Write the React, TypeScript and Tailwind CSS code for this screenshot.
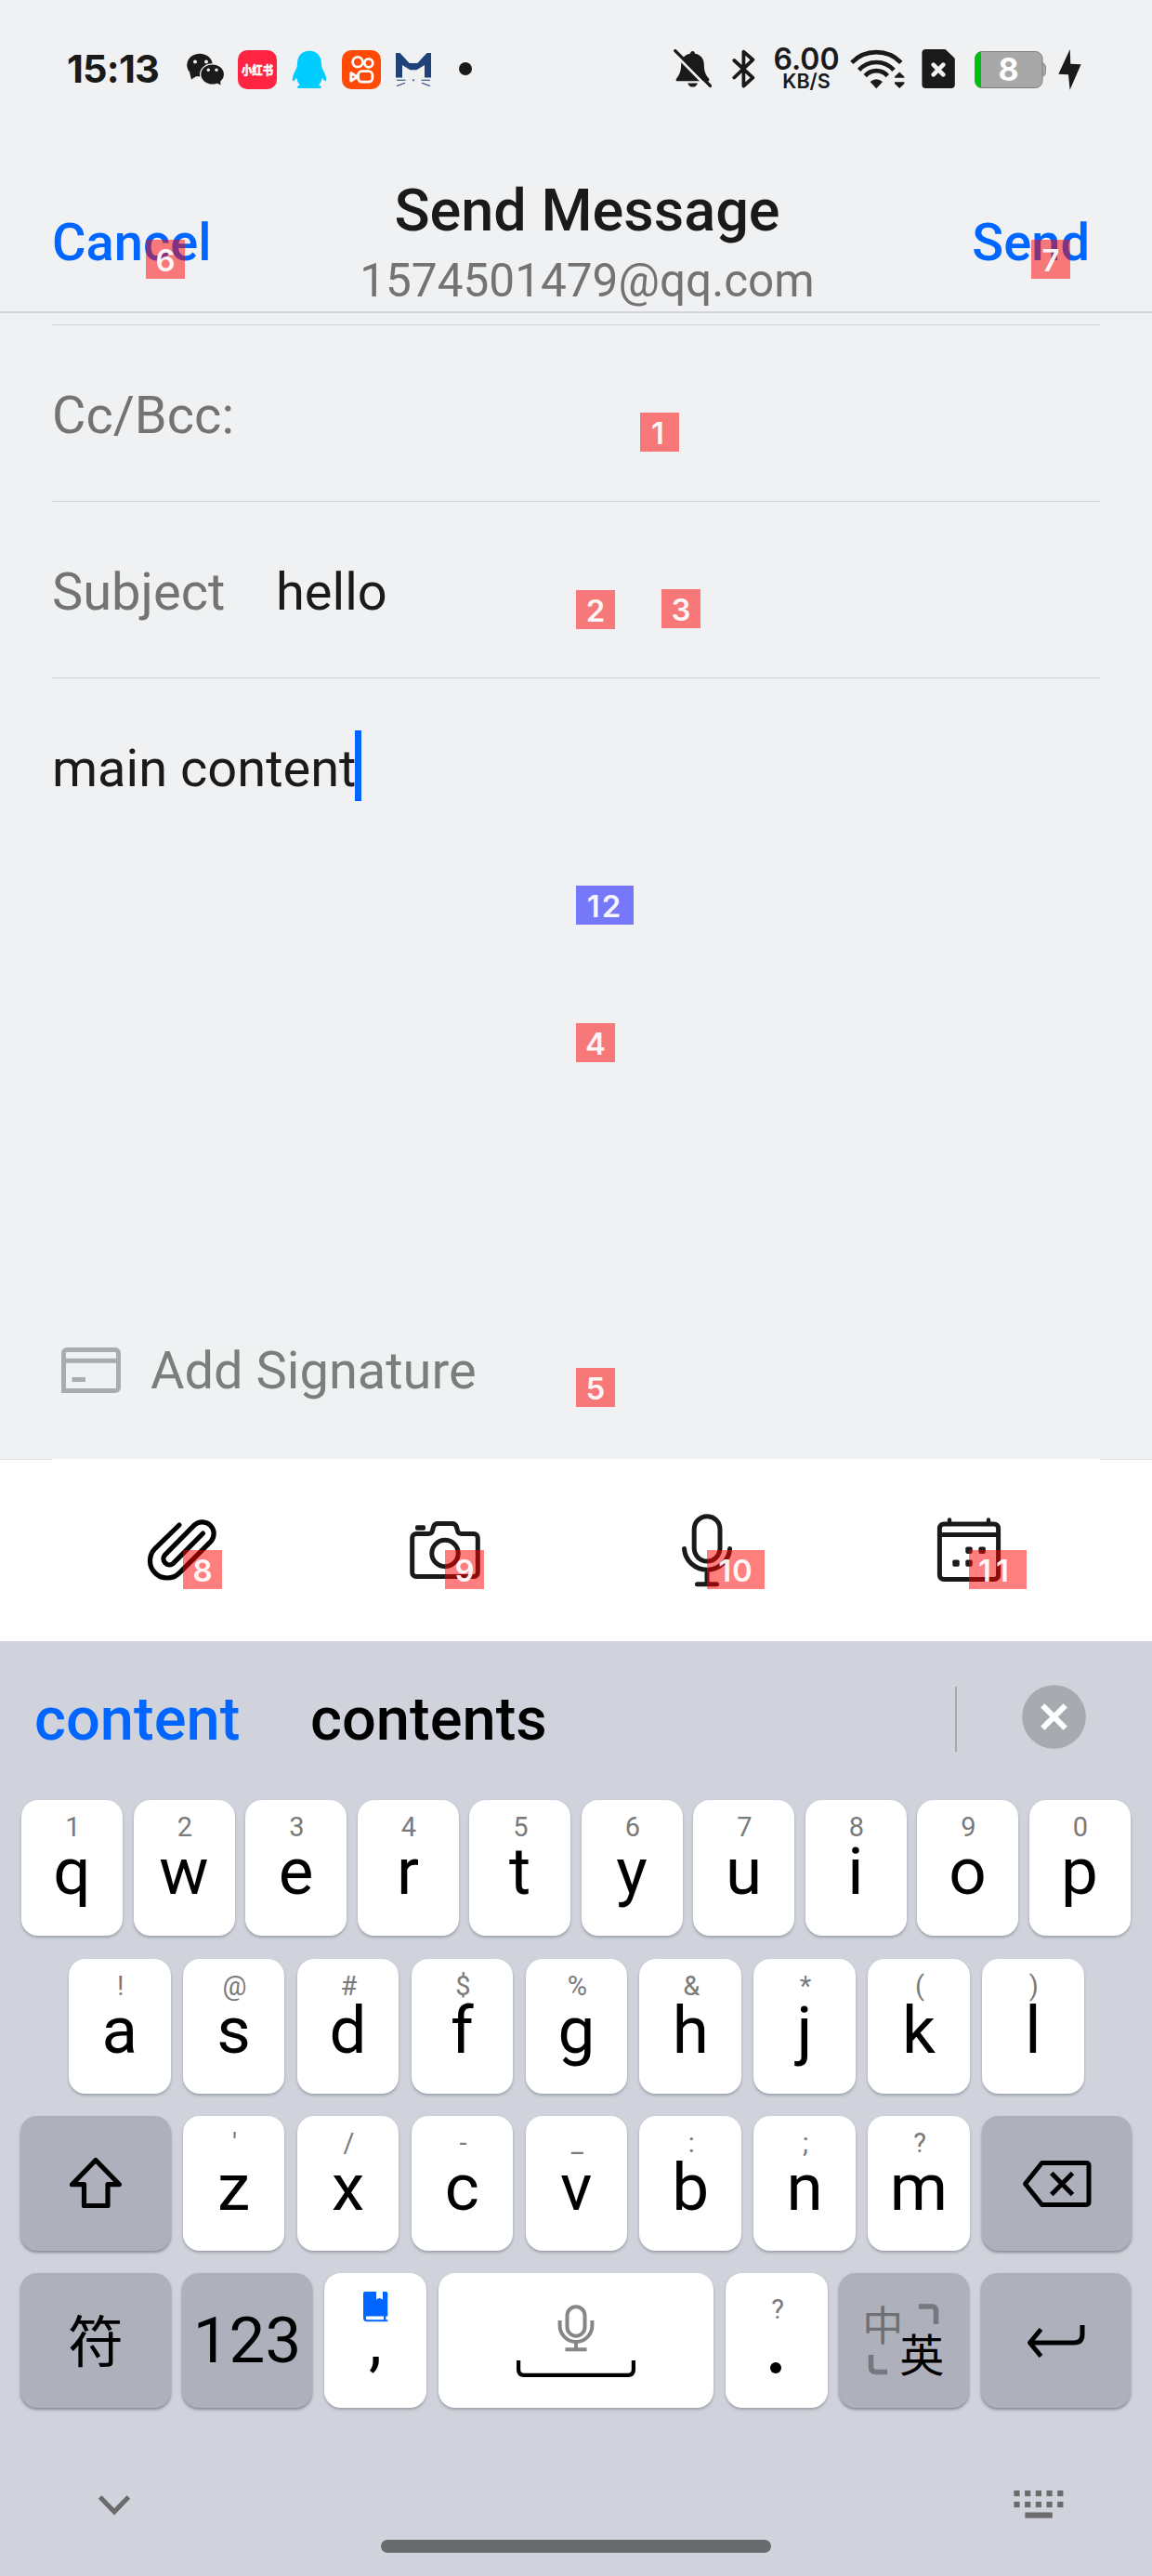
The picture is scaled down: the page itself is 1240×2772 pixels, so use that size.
import React from "react";

type KeyDef = [letter: string, hint: string];

const ROW1: KeyDef[] = [["q", "1"], ["w", "2"], ["e", "3"], ["r", "4"], ["t", "5"], ["y", "6"], ["u", "7"], ["i", "8"], ["o", "9"], ["p", "0"]];
const ROW2: KeyDef[] = [["a", "!"], ["s", "@"], ["d", "#"], ["f", "$"], ["g", "%"], ["h", "&"], ["j", "*"], ["k", "("], ["l", ")"]];
const ROW3: KeyDef[] = [["z", "'"], ["x", "/"], ["c", "-"], ["v", "_"], ["b", ":"], ["n", ";"], ["m", "?"]];

/* ---------- status bar icons ---------- */

const AppIcons = () => (
  <div className="flex items-center">
    <svg className="ml-[30px] h-[42px] w-[41px]" viewBox="201 54 41 42">
      <path d="M204 78 L206 85.5 L213 81Z" fill="#1a1a1a" />
      <ellipse cx="215" cy="70" rx="13.8" ry="12.3" fill="#1a1a1a" />
      <circle cx="210" cy="66.5" r="2" fill="#eff1f3" />
      <circle cx="222" cy="66.5" r="2" fill="#eff1f3" />
      <ellipse cx="228.6" cy="80" rx="13.6" ry="11.8" fill="#eff1f3" />
      <path d="M231 88 L237.5 91.5 L237 85Z" fill="#1a1a1a" />
      <ellipse cx="228.6" cy="80" rx="12.3" ry="10.5" fill="#1a1a1a" />
      <circle cx="224.3" cy="75.3" r="1.7" fill="#eff1f3" />
      <circle cx="233" cy="75.3" r="1.7" fill="#eff1f3" />
    </svg>
    <div className="ml-[14px] flex h-[42px] w-[42px] items-center justify-center rounded-[10px] bg-[#ff2442]">
      <svg className="h-[42px] w-[42px]" viewBox="0 0 42 42">
        <text x="4" y="25.8" textLength="34" lengthAdjust="spacingAndGlyphs" fontSize="13" fontWeight="900" fill="#fff" stroke="#fff" strokeWidth="0.4" fontFamily="'Noto Sans CJK SC', sans-serif">小红书</text>
      </svg>
    </div>
    <svg className="ml-[16px] h-[42px] w-[38px]" viewBox="314 54 38 42">
      <path
        d="M333 54.7C325 54.7 320 60 320 69C319.8 74 318 75 316 80C314.5 84 314.6 87 315.5 87.3C316.5 87.5 318 85.5 319.2 83.5C319.8 87 321 89.5 323 91.5C319.6 92.3 319.3 95 321.5 95H344.5C346.7 95 346.4 92.3 343 91.5C345 89.5 346.2 87 346.8 83.5C348 85.5 349.5 87.5 350.5 87.3C351.4 87 351.5 84 350 80C348 75 346.2 74 346 69C346 60 341 54.7 333 54.7Z"
        fill="#0cf"
      />
    </svg>
    <svg className="ml-[16px] h-[42px] w-[42px]" viewBox="368 54 42 42" fill="none" stroke="#fff" strokeWidth="2.8">
      <rect x="368" y="54" width="42" height="42" rx="10" fill="#ff4a08" stroke="none" />
      <circle cx="385" cy="66.8" r="5.4" />
      <circle cx="396.8" cy="67.8" r="4.5" />
      <rect x="385.5" y="76.7" width="15.4" height="11.4" rx="4" />
      <path d="M377.8 78.5V87L384.5 82.8Z" strokeLinejoin="round" />
    </svg>
    <svg className="ml-[16px] h-[42px] w-[38px]" viewBox="426 54 38 42">
      <path d="M426 57H430.5L440.7 68H449.3L459.5 57H464V83.5H457V70L448.5 75.2H441.5L433 70V83.5H426Z" fill="#1f4378" />
      <path d="M427 86.2H436.5M427 92.6L436 89.3M453.5 86.2H463M454 89.3L463 92.6" stroke="#1f4378" strokeWidth="1.1" />
      <path d="M443.7 85.5H446.3L445 88Z" fill="#1f4378" />
    </svg>
    <div className="ml-[30px] -mt-[2px] h-[14px] w-[14px] rounded-full bg-[#1a1a1a]" />
  </div>
);

const SystemIcons = () => (
  <div className="flex items-center">
    <svg className="h-[44px] w-[41px]" viewBox="723.5 53 41 44">
      <path d="M744 55C745.6 55 746.3 56 746.4 57.5C752.5 58.8 756.3 63.2 756.3 69C756.3 77 758 80.5 761.8 85V87.3H726.3V85C729.8 80.8 731.5 77 731.7 69C731.7 63.2 735.5 58.8 741.6 57.5C741.7 56 742.4 55 744 55Z" fill="#1a1a1a" />
      <path d="M738.8 89.4H749.4C748.6 92 746.8 93.6 744.1 93.6C741.4 93.6 739.6 92 738.8 89.4Z" fill="#1a1a1a" />
      <path d="M722 55L760 94" stroke="#eff1f3" strokeWidth="3" />
      <path d="M725.3 54.6L763 92.4" stroke="#1a1a1a" strokeWidth="3.4" strokeLinecap="round" />
    </svg>
    <svg className="ml-[22px] h-[44px] w-[26px]" viewBox="786.5 53 26 44" fill="none" stroke="#1a1a1a" strokeWidth="3.8" strokeLinecap="round" strokeLinejoin="round">
      <path d="M788.8 65L808.8 83.7L798.9 92.6V55.6L808.8 64.3L788.8 83.5" />
    </svg>
    <div className="-mt-[3px] ml-[17px] flex w-[74px] flex-col items-center text-[#1a1a1a] font-['Inter']">
      <span className="text-[32px] leading-[24px] font-semibold">6.00</span>
      <span className="mt-[2px] text-[21.5px] leading-[18px] font-semibold">KB/S</span>
    </div>
    <svg className="ml-[10px] h-[44px] w-[60px]" viewBox="915 53 60 44" fill="none" stroke="#1a1a1a" strokeWidth="4.7">
      <path d="M916.8 67.3A37 37 0 0 1 969.8 67.3" />
      <path d="M924.6 75.4A25 25 0 0 1 962 75.4" />
      <path d="M931.3 81.6A16 16 0 0 1 955.3 81.6" />
      <path d="M936.6 88Q943.3 82.3 950 88L943.3 95.2Z" fill="#1a1a1a" stroke="none" />
      <path d="M968.2 77.5L973.4 82.4V83.8H963V82.4ZM968.2 95L973.4 90V88.2H963V90Z" fill="#1a1a1a" stroke="none" />
    </svg>
    <svg className="ml-[17px] h-[44px] w-[36px]" viewBox="992 53 36 44">
      <path d="M996.5 53H1016.5C1017.5 53 1018 53.3 1018.6 54L1027 62C1027.6 62.6 1027.8 63 1027.8 64V91C1027.8 93.5 1026.3 95 1023.8 95H996.5C994 95 992.4 93.5 992.4 91V57C992.4 54.5 994 53 996.5 53Z" fill="#1a1a1a" />
      <path d="M1004.7 69.7L1015.3 80.3M1015.3 69.7L1004.7 80.3" stroke="#eff1f3" strokeWidth="4.6" strokeLinecap="round" />
    </svg>
    <svg className="ml-[21px] h-[44px] w-[77px]" viewBox="1049 53 77 44">
      <path d="M1121 68H1122.5C1124.5 68 1125.6 70.5 1125.6 75S1124.5 82 1122.5 82H1121Z" fill="#a8a8a8" stroke="#858585" />
      <rect x="1049.5" y="55.5" width="72.5" height="39" rx="7.5" fill="#a8a8a8" stroke="#7e7e7e" />
      <path d="M1056 55.5V94.5A6.5 7.5 0 0 1 1049.5 87V63A6.5 7.5 0 0 1 1056 55.5Z" fill="#00be13" />
      <text x="1085.5" y="87.3" textAnchor="middle" fontSize="34" fontWeight="700" fill="#fff" fontFamily="Inter, sans-serif">8</text>
    </svg>
    <svg className="ml-[13px] h-[44px] w-[25px]" viewBox="1139 53 25 44">
      <path d="M1151.7 53L1139.3 79.7L1150 80.2L1151.6 96.8L1163.6 69.2L1152.3 68.8Z" fill="#1a1a1a" />
    </svg>
  </div>
);

/* ---------- compose toolbar ---------- */

const ToolIcon = ({ children, color = "#1a1a1a" }: { children: React.ReactNode; color?: string }) => (
  <div className="flex w-[282px] justify-center">
    <svg className="h-[80px] w-[80px]" viewBox="0 0 80 80" fill="none" stroke={color} strokeWidth="5" strokeLinecap="round" strokeLinejoin="round">
      {children}
    </svg>
  </div>
);

const Toolbar = () => (
  <div className="h-[196px] bg-white">
    <div className="flex h-px bg-[#e0e2e4] px-[56px]">
      <div className="flex-1 bg-white" />
    </div>
    <div className="flex px-[56px] pt-[57px]">
      <ToolIcon color="#000">
        <path d="M36 13L9.9 38.4A18.5 18.5 0 0 0 36.1 64.6L70.3 30.3A12.5 12.5 0 0 0 52.7 12.7L20.4 45.4A6.4 6.4 0 0 0 29.4 54.4L61.5 22" strokeWidth="5.2" />
      </ToolIcon>
      <ToolIcon>
        <path d="M9 22.5H22C24.8 22.5 25.9 21.6 26.4 19.5L27.4 15.5C28.2 12.5 29.4 11.4 32.4 11.4H47.6C50.6 11.4 51.8 12.5 52.6 15.5L53.6 19.5C54.1 21.6 55.2 22.5 58 22.5H71A4.3 4.3 0 0 1 75.3 26.8V64.2A4.3 4.3 0 0 1 71 68.5H9A4.3 4.3 0 0 1 4.7 64.2V26.8A4.3 4.3 0 0 1 9 22.5Z" />
        <circle cx="40" cy="43.5" r="14.2" />
        <rect x="8" y="13.3" width="11" height="5.4" rx="2" fill="#1a1a1a" stroke="none" />
      </ToolIcon>
      <ToolIcon>
        <rect x="26.2" y="3.7" width="27.8" height="48.3" rx="13.9" />
        <path d="M15.5 38.5A24.6 24.2 0 0 0 64.6 38.5M40 63V76.5M29.5 76.7H50.5" />
      </ToolIcon>
      <ToolIcon>
        <rect x="8.4" y="12" width="63.2" height="59.5" rx="4.5" />
        <path d="M8.4 23.5H71.6" />
        <path d="M19 7.5V12M61 7.5V12" strokeWidth="4.4" />
        <g fill="#1a1a1a" stroke="none">
          <rect x="36.3" y="36.5" width="7.4" height="7.4" rx="1.8" />
          <rect x="50.4" y="36.5" width="7.4" height="7.4" rx="1.8" />
          <rect x="22.3" y="50.4" width="7.4" height="7.4" rx="1.8" />
          <rect x="36.3" y="50.4" width="7.4" height="7.4" rx="1.8" />
        </g>
      </ToolIcon>
    </div>
  </div>
);

/* ---------- keyboard ---------- */

const LetterKey = ({ def, className }: { def: KeyDef; className: string }) => (
  <div className={"flex flex-col items-center rounded-[18px] bg-white pt-[14px] shadow-[0_2px_3px_rgba(60,65,80,0.35)] " + className}>
    <span className="pl-[2px] text-[29px] leading-[30px] text-[#7a7a7a]">{def[1]}</span>
    <span className="-mt-[3px] text-[71px] leading-[72px] text-black">{def[0]}</span>
  </div>
);

const FnKey = ({ children, className }: { children: React.ReactNode; className: string }) => (
  <div className={"flex h-[145px] items-center justify-center rounded-[18px] bg-[#aeb1bb] text-black shadow-[0_2px_3px_rgba(60,65,80,0.5)] " + className}>
    {children}
  </div>
);

const Keyboard = () => (
  <div className="flex h-[1006px] flex-col bg-[#d0d3db]">
    <div className="flex h-[171px] items-center">
      <span className="-mt-[4px] ml-[37px] w-[297px] text-[65px] leading-[72px] font-medium text-[#0066ff]">content</span>
      <span className="-mt-[4px] text-[65px] leading-[72px] font-medium text-black">contents</span>
      <div className="ml-auto -mt-[3px] h-[70px] w-[2px] bg-[#a5a8ad]" />
      <svg className="mr-[71px] ml-[70px] -mt-[8px] h-[69px] w-[69px]" viewBox="0 0 69 69">
        <circle cx="34.5" cy="34.5" r="34.3" fill="#a7aaaf" />
        <path d="M22.3 22.3L46.7 46.7M46.7 22.3L22.3 46.7" stroke="#fff" strokeWidth="6" />
      </svg>
    </div>
    <div className="flex gap-[11.5px] pl-[23px]">
      {ROW1.map((k) => <LetterKey key={k[0]} def={k} className="h-[146px] w-[109px]" />)}
    </div>
    <div className="mt-[25px] flex gap-[13.4px] pl-[74px]">
      {ROW2.map((k) => <LetterKey key={k[0]} def={k} className="h-[145px] w-[109.5px]" />)}
    </div>
    <div className="mt-[24px] flex gap-[13.4px] pl-[22px]">
      <FnKey className="w-[161.5px]">
        <svg className="-mt-[3px] h-[60px] w-[64px]" viewBox="0 0 64 60" fill="none" stroke="#000" strokeWidth="5.2" strokeLinejoin="round">
          <path d="M32 6.5L57.5 32.7H45V55.5H19.5V32.7H6.5Z" />
        </svg>
      </FnKey>
      {ROW3.map((k) => <LetterKey key={k[0]} def={k} className="h-[145px] w-[109.5px]" />)}
      <FnKey className="w-[161px]">
        <svg className="h-[52px] w-[76px]" viewBox="0 0 76 52" fill="none" stroke="#000" strokeWidth="5" strokeLinejoin="round">
          <path d="M3.5 26L21.5 3.5H69.5A2.5 2.5 0 0 1 72 6V46A2.5 2.5 0 0 1 69.5 48.5H21.5Z" />
          <path d="M31.8 14.5L54.5 37.5M54.5 14.5L31.8 37.5" />
        </svg>
      </FnKey>
    </div>
    <div className="mt-[24px] flex pl-[22px]">
      <FnKey className="w-[162px]">
        <span className="-mt-[5px] text-[60px] leading-[60px] font-['Noto_Sans_CJK_SC']">符</span>
      </FnKey>
      <FnKey className="ml-[12px] w-[140px]">
        <span className="text-[69px] leading-[72px]">123</span>
      </FnKey>
      <div className="ml-[13px] flex h-[145px] w-[110px] flex-col items-center rounded-[18px] bg-white pt-[20px] shadow-[0_2px_3px_rgba(60,65,80,0.35)]">
        <svg className="h-[33px] w-[27px]" viewBox="0 0 27 33">
          <path d="M2 0H14V8.4L17.5 6.8L21 8.4V0H24.5C25.6 0 26.3.7 26.3 2V26.5H24.3V30.2H26.3V32.2H4C1.5 32.2 0 31 0 28V2C0 .7.8 0 2 0ZM3.6 26.6C2.6 26.6 2.6 30.2 3.6 30.2H22V26.6Z" fill="#0066ff" />
        </svg>
        <span className="-mt-[15px] text-[71px] leading-[72px] text-black">,</span>
      </div>
      <div className="ml-[13px] flex h-[145px] w-[296px] flex-col items-center rounded-[18px] bg-white pt-[34px] shadow-[0_2px_3px_rgba(60,65,80,0.35)]">
        <svg className="h-[51px] w-[40px]" viewBox="0 0 40 51" fill="none" stroke="#868686" strokeWidth="4">
          <rect x="10.5" y="2.2" width="19" height="31.5" rx="9.5" />
          <path d="M2.6 17V22.5A17.4 17.4 0 0 0 37.4 22.5V17M20 40V48M8.5 48.3H31.5" />
        </svg>
        <svg className="mt-[9px] h-[18px] w-[128px]" viewBox="0 0 128 18" fill="none" stroke="#000" strokeWidth="4.2">
          <path d="M2.1 0V10Q2.1 15.8 8 15.8H120Q125.9 15.8 125.9 10V0" />
        </svg>
      </div>
      <div className="ml-[13px] flex h-[145px] w-[110px] flex-col items-center rounded-[18px] bg-white pt-[24px] shadow-[0_2px_3px_rgba(60,65,80,0.35)]">
        <span className="pl-[2px] text-[29px] leading-[30px] text-[#7a7a7a]">?</span>
        <div className="mr-[2px] mt-[42px] h-[12px] w-[12px] rounded-full bg-black" />
      </div>
      <FnKey className="ml-[12px] w-[140px]">
        <svg className="h-[145px] w-[140px]" viewBox="903 2446 140 145" fill="none" fontFamily="'Noto Sans CJK SC', sans-serif">
          <text x="928.3" y="2518.5" fontSize="44" fill="#6f7076">中</text>
          <text x="968.3" y="2551.5" fontSize="48" fill="#000">英</text>
          <path d="M989 2482H1003Q1007.5 2482 1007.5 2487V2501M937.5 2534V2547Q937.5 2552.5 943 2552.5H955" stroke="#77787e" strokeWidth="5.6" />
        </svg>
      </FnKey>
      <FnKey className="ml-[13px] w-[161px]">
        <svg className="h-[36px] w-[64px]" viewBox="0 0 64 36" fill="none" stroke="#000" strokeWidth="5">
          <path d="M60 1V11Q60 20 51 20H4M15.5 5.5L3.5 20L15.5 34.5" strokeLinejoin="round" />
        </svg>
      </FnKey>
    </div>
    <div className="mt-[88px] flex items-center justify-between pr-[94px] pl-[105px]">
      <svg className="h-[34px] w-[36px]" viewBox="0 0 36 34" fill="none" stroke="#6b6b6b" strokeWidth="5">
        <path d="M2.6 8L18 23.8L33.4 8" />
      </svg>
      <svg className="h-[34px] w-[56px]" viewBox="1090 2679 56 34" fill="#6b6b6b">
        {[0, 1, 2, 3, 4].map((i) => (
          <g key={i}>
            <rect x={1091.4 + i * 11.7} y="2680" width="6.2" height="6.2" />
            <rect x={1091.4 + i * 11.7} y="2692" width="6.2" height="6.2" />
          </g>
        ))}
        <rect x="1103.4" y="2703.5" width="29.4" height="6.2" />
      </svg>
    </div>
    <div className="mt-[20px] ml-[410px] h-[14px] w-[420px] rounded-[7px] bg-[#696a6e]" />
  </div>
);

/* ---------- numbered markers that float above the page ---------- */

const Marker = ({ n, className }: { n: number; className: string }) => (
  <div className={"absolute flex h-[42px] items-center justify-center pt-[2px] font-['Inter'] text-[33px] leading-[40px] font-semibold text-white/95 " + className}>
    {n}
  </div>
);

const Markers = () => (
  <>
    <Marker n={1} className="top-[444px] left-[689px] w-[42px] bg-[#ff0000]/50 pr-[4px]" />
    <Marker n={2} className="top-[635px] left-[620px] w-[42px] bg-[#ff0000]/50" />
    <Marker n={3} className="top-[634px] left-[712px] w-[42px] bg-[#ff0000]/50" />
    <Marker n={12} className="top-[953px] left-[620px] w-[62px] bg-[#0000ff]/50 tracking-[2px]" />
    <Marker n={4} className="top-[1101px] left-[620px] w-[42px] bg-[#ff0000]/50" />
    <Marker n={5} className="top-[1472px] left-[620px] w-[42px] bg-[#ff0000]/50" />
    <Marker n={6} className="top-[258px] left-[157px] w-[42px] bg-[#ff0000]/50" />
    <Marker n={7} className="top-[258px] left-[1110px] w-[42px] bg-[#ff0000]/50" />
    <Marker n={8} className="top-[1668px] left-[197px] w-[42px] bg-[#ff0000]/50" />
    <Marker n={9} className="top-[1668px] left-[479px] w-[42px] bg-[#ff0000]/50" />
    <Marker n={10} className="top-[1668px] left-[761px] w-[62px] bg-[#ff0000]/50 tracking-[1px]" />
    <Marker n={11} className="top-[1668px] left-[1043px] w-[62px] bg-[#ff0000]/50 pr-[4px] tracking-[5px]" />
  </>
);

export default function App() {
  return (
    <div className="relative flex h-[2772px] w-[1240px] flex-col overflow-hidden bg-[#eff1f3] font-['Roboto','Noto_Sans_CJK_SC',sans-serif] text-[#1a1a1a]">
      <div className="flex h-[150px] items-center justify-between pr-[76px] pl-[72px]">
        <div className="flex items-center">
          <span className="-mt-[2px] w-[99px] font-['Inter'] text-[41.5px] leading-[42px] font-bold tracking-[-0.8px] whitespace-nowrap">15:13</span>
          <AppIcons />
        </div>
        <SystemIcons />
      </div>

      <header className="flex h-[187px] border-b-2 border-[#d4d5d8]">
        <span className="w-[300px] pt-[79px] pl-[56px] text-[56px] leading-[64px] font-medium text-[#0066ff]">Cancel</span>
        <div className="flex w-[664px] flex-col items-center pt-[41px]">
          <h1 className="text-[63px] leading-[72px] font-medium">Send Message</h1>
          <p className="mt-[9px] text-[49.5px] leading-[60px] text-[#727372]">1574501479@qq.com</p>
        </div>
        <span className="flex-1 pt-[79px] pr-[67px] text-right text-[56px] leading-[64px] font-medium text-[#0066ff]">Send</span>
      </header>

      <main className="mx-[56px] mt-[12px] flex h-[1221px] flex-col border-t border-[#d4d5d8] text-[56px] leading-[64px]">
        <div className="flex h-[190px] items-center border-b border-[#d4d5d8] pt-[5px] text-[#727372]">Cc/Bcc:</div>
        <div className="flex h-[190px] items-center border-b border-[#d4d5d8] pt-[5px]">
          <span className="w-[241px] text-[#727372]">Subject</span>
          <span>hello</span>
        </div>
        <div className="flex h-[650px] pt-[56px]">
          <div className="flex h-[76px]">
            <span className="w-[326px] pt-[9px] whitespace-nowrap">main content</span>
            <div className="h-[76px] w-[7px] bg-[#0066ff]" />
          </div>
        </div>
        <div className="flex h-[190px] items-center">
          <svg className="ml-[10px] h-[50px] w-[64px]" viewBox="0 0 64 50" fill="none" stroke="#a9abad" strokeWidth="5">
            <path d="M2.5 47V6A3.5 3.5 0 0 1 6 2.5H58A3.5 3.5 0 0 1 61.5 6V43A3.5 3.5 0 0 1 58 46.5H0" />
            <path d="M2.5 14.2H61.5M11.5 34.5H26" />
          </svg>
          <span className="ml-[32px] text-[#7c7e7e]">Add Signature</span>
        </div>
      </main>

      <Toolbar />
      <Keyboard />
      <Markers />
    </div>
  );
}
